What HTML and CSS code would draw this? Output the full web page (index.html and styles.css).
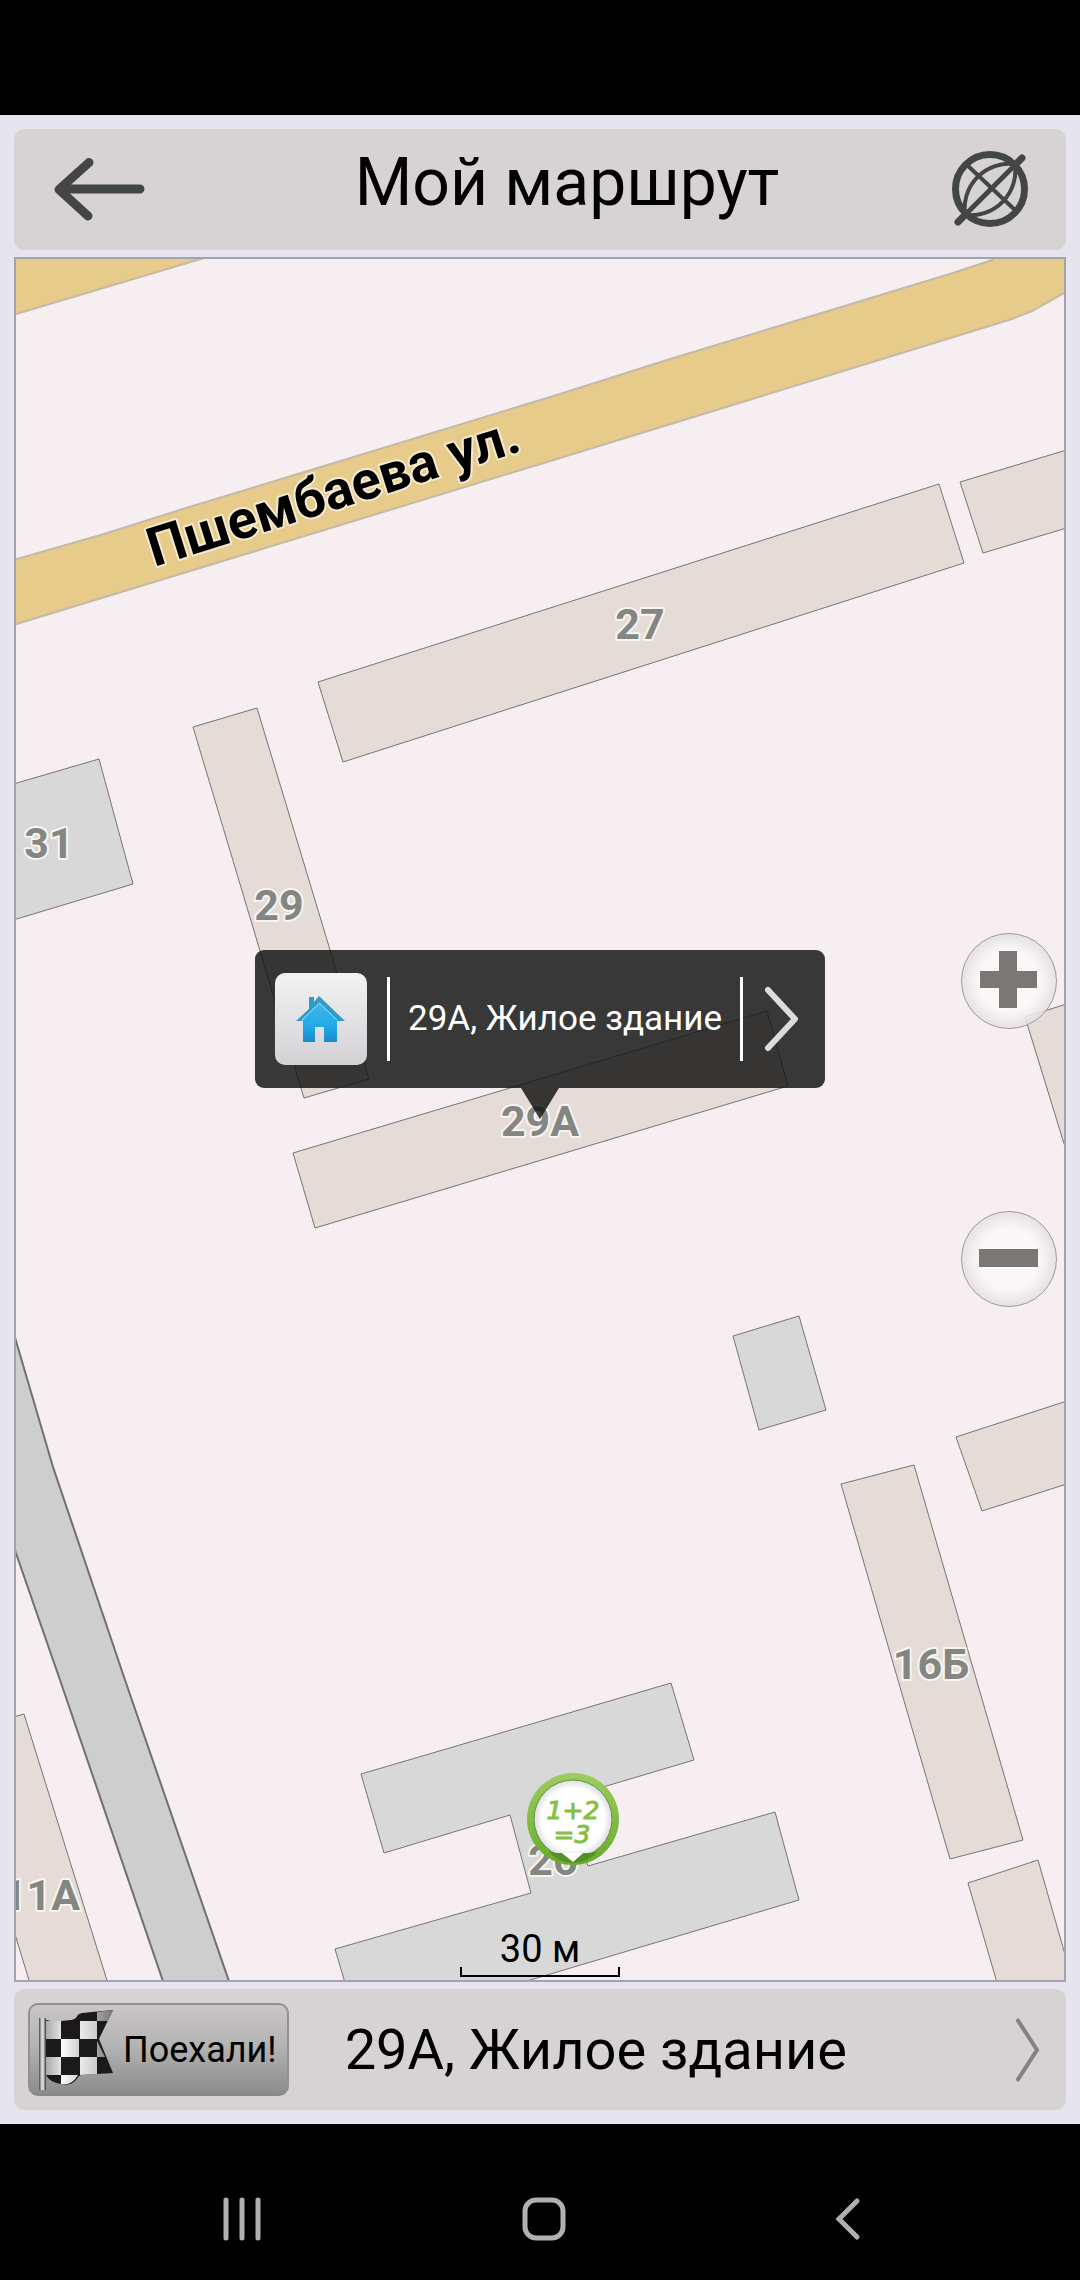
FILE: index.html
```html
<!DOCTYPE html>
<html lang="ru">
<head>
<meta charset="UTF-8">
<meta name="viewport" content="width=device-width, initial-scale=1">
<title>Мой маршрут</title>
<link rel="stylesheet" href="styles.css">
</head>

<body>
<div class="status"></div>

<div class="app">
	<header class="bar header">
		<button class="icon-btn back" aria-label="Назад">
			<svg width="92" height="66" viewBox="53 156 92 66"><path d="M140 188H60M89 161.500L59 188.500L88 215" fill="none" stroke="#444646" stroke-width="9" stroke-linecap="round" stroke-linejoin="round"/></svg>
		</button>
		<h1>Мой маршрут</h1>
		<button class="icon-btn" aria-label="Сеть отключена">
			<svg width="80" height="80" viewBox="950 150 80 80">
				<g fill="none" stroke="#444646">
					<circle cx="990" cy="189" r="34.500" stroke-width="7"/>
					<path d="M1015 164A45 45 0 0 0 965 215A45 45 0 0 0 1015 164M967 165L1015 210" stroke-width="4"/>
					<path d="M958 222L1022 158" stroke-width="5"/>
					<path d="M958 222L966 214M1014 166L1022 158" stroke-width="7" stroke-linecap="round"/>
				</g>
			</svg>
		</button>
	</header>

	<main class="map">
		<svg class="plan" viewBox="16 259 1048 1721" preserveAspectRatio="xMidYMid slice">
			<!-- дороги -->
			<path class="road" d="M10 250H231L16 314L10 316Z"/>
			<path class="road" d="M10 561L104 534L186 508L311 470L560 394L667 360L953 273L992 260L1006 250H1074V288L1064 293L1032 311L1012 319L879 360L560 458L10 626Z"/>
			<path class="lane" d="M10 1320L16 1341L53 1467L125 1680L232 1990H166L60 1680L10 1536Z"/>

			<!-- дома -->
			<g class="house">
				<path d="M318 682L939 484L964 563L343 762Z"/>
				<path d="M960 482L1070 449V527L983 553Z"/>
				<path d="M193 727L257 708L369 1079L304 1098Z"/>
				<path d="M293 1153L767 1011L788 1086L315 1228Z"/>
				<path d="M1025 1017L1070 1003V1163Z"/>
				<path d="M841 1484L914 1465L1023 1840L950 1859Z"/>
				<path d="M956 1437L1070 1400V1483L982 1511Z"/>
				<path d="M968 1883L1038 1860L1074 1986H998Z"/>
				<path d="M10 1718L24 1714L110 1990H32L10 1918Z"/>
			</g>
			<g class="public">
				<path d="M10 785L99 759L133 884L10 921Z"/>
				<path d="M733 1336L799 1316L826 1410L759 1430Z"/>
				<path d="M361 1774L671 1683L694 1760L566 1798L588 1866L775 1812L799 1900L510 1986H346L335 1949L531 1893L510 1815L384 1853Z"/>
			</g>

			<g class="number">
				<text x="640" y="639">27</text>
				<text x="49" y="858">31</text>
				<text x="279" y="920">29</text>
				<text x="540" y="1136">29А</text>
				<text x="931" y="1679">16Б</text>
				<text x="41" y="1910">11А</text>
				<text x="553" y="1875">26</text>
			</g>
			<text class="street" transform="translate(154 567) rotate(-17.500)">Пшембаева ул.</text>

			<!-- школа -->
			<defs>
				<linearGradient id="ring" x1="0" y1="0" x2="0" y2="1"><stop offset="0" stop-color="#9ccd5e"/><stop offset="1" stop-color="#69ab2b"/></linearGradient>
				<radialGradient id="disc"><stop offset=".8" stop-color="#fff"/><stop offset="1" stop-color="#dcdbe0"/></radialGradient>
			</defs>
			<circle cx="573" cy="1819" r="46" fill="url(#ring)"/>
			<circle cx="573" cy="1819" r="39" fill="url(#disc)" stroke="#619443" stroke-width="1"/>
			<path d="M548 1851Q551 1853 562 1853L573 1862L583 1853Q594 1853 598 1851Q588 1863 573 1863Q558 1863 548 1851Z" fill="#519323"/>
			<path d="M562 1853L573 1862L583 1853Z" fill="#fff"/>
			<text class="school" x="573" y="1819">1+2</text>
			<text class="school" x="572" y="1843">=3</text>
		</svg>

		<div class="zoom">
			<button aria-label="Приблизить"><svg width="60" height="60"><path d="M1 20H20V0H38V20H58V37H38V57H20V37H1Z" fill="#7b7774"/></svg></button>
			<button aria-label="Отдалить"><svg width="60" height="60"><path d="M0 20H59V38H0Z" fill="#7b7774"/></svg></button>
		</div>

		<button class="popup">
			<span class="tile">
				<svg width="50" height="50" viewBox="297 993 50 50">
					<defs><linearGradient id="wall" x1="0" y1="0" x2="0" y2="1"><stop offset="0" stop-color="#43b8e8"/><stop offset=".6" stop-color="#20a8eb"/><stop offset="1" stop-color="#178bca"/></linearGradient></defs>
					<path d="M310 1008V996H315V1001L320 995L346 1020H338L320.500 1003L303 1020H297Z" fill="#2e9dca"/>
					<path d="M320.500 1002L338 1019V1041H325V1026H316V1041H304V1019Z" fill="url(#wall)"/>
					<path d="M303 1019L320.500 1002L338 1019" fill="none" stroke="#a9e1f6" stroke-width="1"/>
				</svg>
			</span>
			<span class="popup-text">29А, Жилое здание</span>
			<svg width="38" height="66"><path d="M5 4L32 33L5 62" fill="none" stroke="#dcdcdc" stroke-width="6" stroke-linecap="round" stroke-linejoin="round"/></svg>
		</button>

		<div class="scale">30 м</div>
	</main>

	<footer class="bar footer">
		<button class="go">
			<svg width="76" height="82" viewBox="37 2008 76 82">
				<defs>
					<linearGradient id="fold" x1="0" x2="1"><stop offset="0" stop-color="#aaa"/><stop offset=".45" stop-color="#fff"/><stop offset="1" stop-color="#ccc"/></linearGradient>
					<linearGradient id="fold2" x1="0" x2="1"><stop offset="0" stop-color="#fff"/><stop offset="1" stop-color="#777"/></linearGradient>
					<linearGradient id="pole" x1="0" x2="1"><stop offset="0" stop-color="#444"/><stop offset=".35" stop-color="#ccc"/><stop offset=".6" stop-color="#ddd"/><stop offset="1" stop-color="#333"/></linearGradient>
				</defs>
				<path d="M38 2017H45V2089H38Z" fill="url(#pole)"/>
				<path d="M45 2019Q52 2021 60 2020L70 2019Q75 2018 76 2015Q77 2013 81 2012L112 2009L98 2038L112 2072L80 2074Q77 2075 75 2079Q70 2085 60 2083Q48 2081 45 2074Z" fill="#1b191b"/>
				<path d="M45 2020H60V2038H45ZM79 2020H96V2038H79ZM45 2056H60V2074H45ZM79 2056H96V2073L79 2074Z" fill="url(#fold)"/>
				<path d="M60 2038H78V2056H60ZM60 2074H77Q71 2085 60 2083ZM96 2011L112 2009L107 2020H96ZM96 2040L104 2056H96Z" fill="url(#fold2)"/>
			</svg>
			<span>Поехали!</span>
		</button>
		<a class="target" href="#">
			<span>29А, Жилое здание</span>
			<svg width="24" height="66"><path d="M1 2L21 33L1 64" fill="none" stroke="#858287" stroke-width="4"/></svg>
		</a>
	</footer>
</div>

<nav class="nav">
	<button aria-label="Последние"><svg width="44" height="44"><path d="M6 3V41M22 3V41M38 3V41" stroke="#b0b0b0" stroke-width="5" stroke-linecap="round"/></svg></button>
	<button aria-label="Домой"><svg width="44" height="44"><rect x="3" y="3" width="38" height="38" rx="11" fill="none" stroke="#b0b0b0" stroke-width="5"/></svg></button>
	<button aria-label="Назад"><svg width="44" height="44"><path d="M32 4L14 22L32 40" fill="none" stroke="#b0b0b0" stroke-width="5" stroke-linecap="round"/></svg></button>
</nav>
</body>
</html>
```

FILE: styles.css
```css
*{
	box-sizing:border-box;
}
body{
	margin:0;
	min-height:100vh;
	display:flex;
	flex-direction:column;
	background:#000;
	color:#000;
	font-family:Roboto, "Liberation Sans", sans-serif;
}
button{
	padding:0;
	border:0;
	background:none;
	color:inherit;
	font:inherit;
	cursor:pointer;
}
svg{
	display:block;
	flex:none;
}
.status{
	height:115px;
}
.app{
	flex:1;
	display:flex;
	flex-direction:column;
	gap:7px;
	padding:14px;
	background:#e6e5ed;
}

/* верхняя и нижняя панели */
.bar{
	min-height:121px;
	display:flex;
	align-items:center;
	border-radius:10px;
	background:#d7d3d5;
}
.header{
	justify-content:space-between;
	padding:0 36px 0 39px;
}
h1{
	margin:0;
	padding:0 0 14px 39px;
	font-size:66px;
	font-weight:400;
	line-height:76px;
}
.footer{
	padding:0 14px;
}
.go{
	display:flex;
	align-items:center;
	gap:9px;
	height:93px;
	padding:0 10px 0 8px;
	border:2px solid #929092;
	border-bottom-color:#888;
	border-radius:10px;
	background:linear-gradient(#cac6c8, #b4b4b4 45%, #8b8b8b);
	font-size:36px;
}
.target{
	flex:1;
	display:flex;
	align-items:center;
	justify-content:space-between;
	padding:0 12px 0 56px;
	color:#000;
	font-size:56px;
	text-decoration:none;
}

/* карта */
.map{
	position:relative;
	flex:1;
	min-height:600px;
	overflow:hidden;
	border:2px solid #a2a3ad;
	background:#f6eef0;
}
.plan{
	width:100%;
	height:100%;
}
.road{
	fill:#e6cb8b;
	stroke:#c5b9a8;
	stroke-width:2;
}
.lane{
	fill:#cdcecd;
	stroke:#707070;
	stroke-width:2;
}
.house, .public{
	fill:#e5dcd8;
	stroke:#7a7273;
	stroke-width:1;
}
.public{
	fill:#d8d8d8;
}
.number, .street{
	font-size:43px;
	font-weight:700;
	text-anchor:middle;
	fill:#838681;
	stroke:#f8f4f2;
	stroke-width:4;
	stroke-linejoin:round;
	paint-order:stroke;
}
.street{
	font-size:54px;
	text-anchor:start;
	fill:#000;
	stroke:#f5ead0;
}
.school{
	font:italic 25px "DejaVu Sans", sans-serif;
	text-anchor:middle;
	fill:#85bf43;
	stroke:#85bf43;
	stroke-width:1;
}

.zoom{
	position:absolute;
	top:50%;
	right:7px;
	display:flex;
	flex-direction:column;
	gap:182px;
	transform:translateY(-50%);
}
.zoom button{
	display:grid;
	place-items:center;
	width:96px;
	height:96px;
	border:1px solid #a09a9d;
	border-radius:50%;
	background:radial-gradient(circle closest-side, rgba(252,248,249,.9) 65%, rgba(226,224,225,.85));
}

.popup{
	position:absolute;
	left:50%;
	bottom:calc(50% + 32px);
	display:flex;
	align-items:center;
	gap:20px;
	height:138px;
	padding:0 24px 0 20px;
	border-radius:9px;
	background:rgba(20,20,20,.84);
	color:#fff;
	font-size:35px;
	white-space:nowrap;
	transform:translateX(-50%);
}
.popup:after{
	content:"";
	position:absolute;
	top:100%;
	left:50%;
	margin-left:-19px;
	border:19px solid transparent;
	border-top:31px solid rgba(20,20,20,.84);
	border-bottom:0;
}
.tile{
	display:grid;
	place-items:center;
	width:92px;
	height:92px;
	border-radius:10px;
	background:linear-gradient(#f3f2f3, #d2d2d5);
}
.popup-text{
	padding:0 18px;
	border:solid #fff;
	border-width:0 3px;
	line-height:84px;
}

/* масштаб */
.scale{
	position:absolute;
	left:50%;
	bottom:3px;
	width:160px;
	margin-left:-80px;
	font-size:38px;
	line-height:36px;
	text-align:center;
}
.scale:after{
	content:"";
	display:block;
	height:8px;
	border:2px solid #000;
	border-top:0;
}

/* системные кнопки */
.nav{
	display:grid;
	grid-template-columns:repeat(3, 1fr);
	justify-items:center;
	align-items:center;
	height:156px;
	padding:34px 82px 0 91px;
}
```
